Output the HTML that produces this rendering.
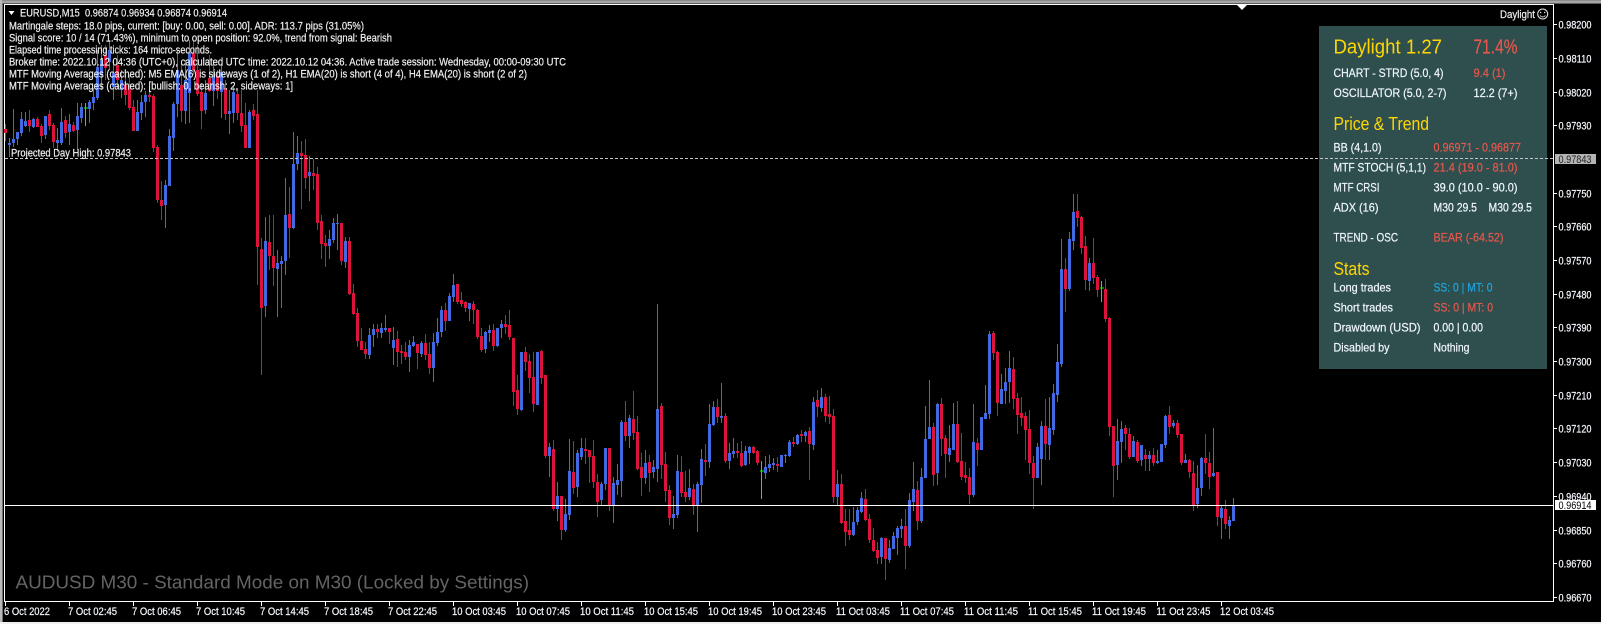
<!DOCTYPE html>
<html><head><meta charset="utf-8"><title>EURUSD,M15</title>
<style>
html,body{margin:0;padding:0;background:#000;width:1601px;height:624px;overflow:hidden}
svg{display:block;position:absolute;left:0;top:0}
text{font-family:"Liberation Sans",Arial,sans-serif;white-space:pre}
.t{font-size:11px;fill:#f0f0f0;stroke:#f0f0f0;stroke-width:.2px}
.a{font-size:11px;fill:#f6f9ff;stroke:#f6f9ff;stroke-width:.2px}
.p{font-size:12px;fill:#f2f8fc;stroke:#f2f8fc;stroke-width:.2px}
.h{font-size:20px;fill:#ffd700}
.s{font-size:18px;fill:#ffd700}
.r{fill:#e9584c;stroke:#e9584c;stroke-width:.2px}
.b{fill:#1ea7e0;stroke:#1ea7e0;stroke-width:.2px}
</style></head><body>
<svg width="1601" height="624" viewBox="0 0 1601 624" xmlns="http://www.w3.org/2000/svg">
<rect width="1601" height="624" fill="#000"/>
<g shape-rendering="crispEdges">
<rect x="0" y="0" width="1601" height="1" fill="#8c8c8c"/>
<rect x="0" y="1" width="1601" height="2" fill="#a6a6a6"/>
<rect x="0" y="3" width="1601" height="1" fill="#5c5c5c"/>
<rect x="0" y="0" width="2" height="624" fill="#b8b8b8"/>
<rect x="2" y="3" width="1" height="621" fill="#707070"/>
<rect x="0" y="622" width="1601" height="2" fill="#f0f0f0"/>
<rect x="4" y="4" width="1550" height="1" fill="#fff"/>
<rect x="4" y="4" width="1" height="598" fill="#fff"/>
<rect x="1553" y="4" width="1" height="598" fill="#fff"/>
<rect x="4" y="601" width="1550" height="1" fill="#fff"/>
</g>
<g fill="none" shape-rendering="crispEdges">
<!-- blue wicks -->
<path stroke="#4169e1" stroke-width="1" d="M9.5 138V157M13.5 109V147M17.5 132V145M21.5 112V136M25.5 112V127M33.5 118V128M45.5 116V139M57.5 128V152M61.5 108V145M69.5 114V145M77.5 103V150M81.5 103V123M89.5 100V123M93.5 88V110M97.5 50V100M101.5 45V90M109.5 40V70M113.5 60V100M121.5 70V98M137.5 100V131M141.5 95V120M145.5 91V117M165.5 180V228M169.5 129V186M173.5 102V151M177.5 50V117M185.5 60V124M189.5 40V123M205.5 80V114M213.5 60V106M221.5 65V118M229.5 90V134M233.5 85V123M249.5 110V148M265.5 217V317M277.5 250V317M281.5 256V308M285.5 178V275M293.5 132V229M297.5 136V170M309.5 156V201M329.5 230V259M333.5 218V243M337.5 214V250M345.5 237V268M369.5 328V359M373.5 324V347M381.5 323V338M385.5 315V332M393.5 327V365M409.5 340V372M413.5 336V347M421.5 341V357M433.5 333V382M437.5 318V346M441.5 306V337M449.5 293V321M453.5 274V302M469.5 303V321M485.5 331V353M489.5 325V342M497.5 328V347M501.5 320V338M521.5 352V411M537.5 352V405M549.5 443V477M557.5 482V521M565.5 499V532M569.5 439V520M577.5 450V497M581.5 438V460M601.5 482V506M605.5 448V490M613.5 477V523M617.5 464V495M621.5 420V497M629.5 415V448M645.5 450V484M653.5 460V478M657.5 304V482M673.5 496V529M677.5 455V518M689.5 469V500M697.5 482V532M701.5 449V503M709.5 404V468M713.5 401V426M721.5 383V423M729.5 443V469M733.5 438V458M745.5 446V466M749.5 446V464M765.5 456V479M769.5 455V472M773.5 458V470M781.5 455V467M785.5 454V463M789.5 440V457M797.5 434V445M805.5 431V442M813.5 397V450M821.5 388V412M837.5 470V506M853.5 507V536M857.5 507V525M861.5 492V513M881.5 537V564M889.5 540V563M893.5 532V549M897.5 526V555M901.5 519V538M909.5 493V548M913.5 462V511M921.5 468V523M925.5 406V478M929.5 380V439M937.5 403V485M949.5 425V462M953.5 403V450M973.5 404V497M981.5 417V450M985.5 385V419M989.5 331V419M1001.5 374V404M1005.5 368V404M1009.5 351V403M1037.5 443V478M1041.5 421V485M1049.5 397V460M1053.5 384V435M1057.5 344V402M1061.5 239V367M1069.5 232V291M1073.5 194V250M1089.5 258V291M1117.5 419V480M1121.5 421V463M1133.5 436V457M1141.5 445V466M1149.5 451V471M1157.5 450V464M1161.5 444V462M1165.5 415V448M1173.5 420V428M1185.5 454V463M1197.5 465V508M1201.5 457V496M1213.5 428V477M1221.5 505V539M1229.5 516V539M1233.5 498V521"/>
<!-- blue bodies -->
<path stroke="#4169e1" stroke-width="3" d="M9.5 143V145M13.5 139V143M17.5 132V139M21.5 119V133M25.5 121V126M33.5 119V127M45.5 116V135M57.5 140V143M61.5 122V143M69.5 124V132M77.5 116V130M81.5 107V118M89.5 102V109M93.5 97V103M97.5 67V98M101.5 60V75M109.5 50V62M113.5 73V87M121.5 80V90M137.5 112V131M141.5 102V113M145.5 95V102M165.5 185V205M169.5 136V186M173.5 104V138M177.5 70V104M185.5 80V111M189.5 53V93M205.5 93V110M213.5 75V91M221.5 72V92M229.5 111V114M233.5 92V113M249.5 112V148M265.5 241V306M277.5 263V269M281.5 261V264M285.5 215V261M293.5 164V228M297.5 153V164M309.5 172V176M329.5 239V246M333.5 223V240M337.5 223V224M345.5 241V262M369.5 335V355M373.5 329V335M381.5 328V333M385.5 328V330M393.5 340V348M409.5 345V357M413.5 342V346M421.5 343V354M433.5 342V368M437.5 332V343M441.5 310V332M449.5 296V321M453.5 285V297M469.5 303V309M485.5 332V349M489.5 330V333M497.5 328V346M501.5 324V328M521.5 352V410M537.5 352V405M549.5 447V456M557.5 496V509M565.5 514V530M569.5 471V515M577.5 453V487M581.5 448V457M601.5 484V500M605.5 448V484M613.5 483V505M617.5 480V485M621.5 422V481M629.5 418V436M645.5 463V478M653.5 467V472M657.5 409V469M673.5 514V518M677.5 471V515M689.5 488V497M697.5 484V505M701.5 459V485M709.5 424V462M713.5 407V425M721.5 416V418M729.5 453V461M733.5 451V454M745.5 451V465M749.5 447V453M765.5 467V473M769.5 464V468M773.5 463V465M781.5 455V467M785.5 455V456M789.5 442V456M797.5 435V444M805.5 432V436M813.5 402V445M821.5 397V408M837.5 484V497M853.5 522V535M857.5 510V522M861.5 498V512M881.5 538V557M889.5 548V560M893.5 536V549M897.5 528V538M901.5 526V529M909.5 500V546M913.5 489V502M921.5 477V521M925.5 439V478M929.5 427V439M937.5 404V473M949.5 448V455M953.5 424V450M973.5 442V495M981.5 417V450M985.5 413V419M989.5 334V414M1001.5 389V404M1005.5 382V391M1009.5 368V382M1037.5 447V478M1041.5 426V459M1049.5 428V445M1053.5 393V430M1057.5 362V395M1061.5 269V364M1069.5 239V289M1073.5 212V241M1089.5 263V281M1117.5 441V465M1121.5 429V442M1133.5 441V457M1141.5 445V460M1149.5 455V459M1157.5 461V463M1161.5 444V462M1165.5 416V445M1173.5 423V426M1185.5 460V463M1197.5 488V504M1201.5 458V488M1213.5 473V476M1221.5 508V518M1229.5 520V526M1233.5 505V521"/>
<!-- red wicks -->
<path stroke="#dc143c" stroke-width="1" d="M5.5 124V141M29.5 110V132M37.5 117V127M41.5 124V143M49.5 110V130M53.5 123V148M65.5 116V138M73.5 122V132M105.5 45V80M117.5 55V88M125.5 75V105M129.5 75V110M133.5 100V131M149.5 87V102M153.5 94V152M157.5 145V203M161.5 181V220M181.5 62V122M193.5 40V75M197.5 45V96M201.5 83V129M209.5 55V92M217.5 70V99M225.5 80V120M237.5 88V120M241.5 90V132M245.5 103V148M253.5 104V120M257.5 90V285M261.5 238V375M269.5 215V270M273.5 215V286M289.5 187V258M301.5 141V209M305.5 139V189M313.5 159V190M317.5 167V230M321.5 215V259M325.5 235V267M341.5 223V265M349.5 237V295M353.5 284V315M357.5 308V347M361.5 328V350M365.5 342V359M377.5 324V338M389.5 328V344M397.5 331V367M401.5 345V364M405.5 342V360M417.5 344V369M425.5 334V360M429.5 342V374M445.5 303V331M457.5 284V304M461.5 292V307M465.5 301V312M473.5 301V324M477.5 309V339M481.5 328V352M493.5 324V351M505.5 315V334M509.5 310V340M513.5 338V406M517.5 375V415M525.5 347V371M529.5 354V393M533.5 352V412M541.5 350V384M545.5 375V458M553.5 440V511M561.5 496V540M573.5 441V494M585.5 438V464M589.5 450V483M593.5 440V488M597.5 474V517M609.5 448V511M625.5 401V441M633.5 391V440M637.5 416V470M641.5 453V496M649.5 455V492M661.5 403V479M665.5 452V502M669.5 485V525M681.5 456V497M685.5 471V502M693.5 484V515M705.5 444V476M717.5 399V423M725.5 413V463M737.5 443V458M741.5 441V467M753.5 446V454M757.5 450V465M777.5 457V472M793.5 437V447M801.5 430V442M809.5 427V480M817.5 390V417M825.5 394V422M829.5 396V424M833.5 409V503M841.5 474V524M845.5 509V546M849.5 509V540M865.5 489V521M869.5 514V543M873.5 528V552M877.5 542V564M885.5 538V580M905.5 509V569M917.5 481V530M933.5 423V486M941.5 398V456M945.5 435V478M957.5 401V463M961.5 433V480M965.5 462V483M969.5 468V504M977.5 438V466M993.5 331V360M997.5 351V416M1013.5 357V409M1017.5 393V434M1021.5 397V426M1025.5 412V460M1029.5 410V474M1033.5 456V509M1045.5 399V460M1065.5 258V312M1077.5 194V227M1081.5 216V254M1085.5 236V290M1093.5 238V284M1097.5 275V297M1105.5 279V322M1109.5 317V436M1113.5 426V497M1125.5 425V450M1129.5 428V459M1137.5 440V463M1145.5 449V471M1153.5 448V466M1169.5 406V434M1177.5 420V438M1181.5 434V465M1189.5 459V478M1193.5 461V511M1205.5 434V474M1209.5 452V489M1217.5 472V526M1225.5 500V529"/>
<!-- red bodies -->
<path stroke="#dc143c" stroke-width="3" d="M5.5 129V133M29.5 120V126M37.5 119V127M41.5 126V136M49.5 114V126M53.5 125V142M65.5 120V133M73.5 125V131M105.5 55V68M117.5 65V80M125.5 85V95M129.5 88V108M133.5 107V131M149.5 95V97M153.5 96V148M157.5 147V200M161.5 200V206M181.5 85V111M193.5 53V70M197.5 70V94M201.5 92V111M209.5 78V91M217.5 76V91M225.5 88V114M237.5 94V113M241.5 113V126M245.5 125V148M253.5 110V116M257.5 114V247M261.5 249V308M269.5 242V256M273.5 256V268M289.5 214V228M301.5 153V156M305.5 155V178M313.5 173V176M317.5 174V223M321.5 221V244M325.5 243V246M341.5 223V261M349.5 241V294M353.5 293V314M357.5 313V341M361.5 341V350M365.5 349V354M377.5 329V332M389.5 328V332M397.5 339V352M401.5 351V353M405.5 352V357M417.5 344V353M425.5 343V355M429.5 354V368M445.5 310V321M457.5 284V302M461.5 300V304M465.5 302V308M473.5 304V310M477.5 310V337M481.5 336V350M493.5 330V346M505.5 324V327M509.5 325V337M513.5 338V392M517.5 390V409M525.5 352V362M529.5 361V378M533.5 377V404M541.5 351V378M545.5 375V456M553.5 449V509M561.5 496V530M573.5 472V488M585.5 449V451M589.5 450V457M593.5 456V482M597.5 482V502M609.5 448V505M625.5 422V436M633.5 419V433M637.5 432V469M641.5 467V478M649.5 462V473M661.5 406V465M665.5 464V491M669.5 490V518M681.5 472V493M685.5 492V497M693.5 489V505M705.5 460V462M717.5 407V417M725.5 416V461M737.5 451V453M741.5 453V466M753.5 447V453M757.5 451V463M777.5 464V466M793.5 442V444M801.5 434V436M809.5 431V444M817.5 400V407M825.5 397V416M829.5 414V417M833.5 416V497M841.5 484V523M845.5 521V532M849.5 530V535M865.5 499V520M869.5 519V540M873.5 540V551M877.5 550V558M885.5 538V559M905.5 526V546M917.5 490V521M933.5 427V475M941.5 404V439M945.5 438V454M957.5 424V462M961.5 461V477M965.5 475V478M969.5 477V495M977.5 443V450M993.5 333V353M997.5 352V403M1013.5 369V399M1017.5 398V415M1021.5 413V418M1025.5 416V430M1029.5 429V463M1033.5 463V478M1045.5 426V444M1065.5 269V289M1077.5 211V218M1081.5 217V248M1085.5 246V280M1093.5 263V278M1097.5 277V290M1105.5 289V319M1109.5 318V427M1113.5 426V466M1125.5 428V434M1129.5 434V457M1137.5 442V461M1145.5 455V459M1153.5 455V463M1169.5 415V427M1177.5 423V435M1181.5 434V463M1189.5 460V472M1193.5 473V505M1205.5 458V463M1209.5 463V477M1217.5 472V517M1225.5 509V524"/>
<!-- green doji -->
<path stroke="#00ff00" stroke-width="1" d="M85.5 103V126M84 108H88M761.5 461V499M760 471H764M1101.5 281V302M1100 288H1104"/>
</g>
<!-- panel -->
<rect x="1319" y="26" width="228" height="343" fill="#2f4f4f" shape-rendering="crispEdges"/>
<!-- lines -->
<path d="M5 158.5H1553" stroke="#c8c8c8" stroke-width="1" stroke-dasharray="3 2" shape-rendering="crispEdges" fill="none"/>
<rect x="5" y="505" width="1548" height="1" fill="#fff" shape-rendering="crispEdges"/>
<!-- triangle markers -->
<path d="M1237 5H1247L1242 10Z" fill="#fff"/>
<path d="M8.5 11H14.5L11.5 15Z" fill="#fff"/>
<!-- top left text -->
<text class="t" x="20" y="16.5" textLength="207" lengthAdjust="spacingAndGlyphs">EURUSD,M15  0.96874 0.96934 0.96874 0.96914</text>
<text class="t" x="9" y="29.5" textLength="355" lengthAdjust="spacingAndGlyphs">Martingale steps: 18.0 pips, current: [buy: 0.00, sell: 0.00]. ADR: 113.7 pips (31.05%)</text>
<text class="t" x="9" y="41.5" textLength="383" lengthAdjust="spacingAndGlyphs">Signal score: 10 / 14 (71.43%), minimum to open position: 92.0%, trend from signal: Bearish</text>
<text class="t" x="9" y="53.5" textLength="203" lengthAdjust="spacingAndGlyphs">Elapsed time processing ticks: 164 micro-seconds.</text>
<text class="t" x="9" y="65.5" textLength="557" lengthAdjust="spacingAndGlyphs">Broker time: 2022.10.12 04:36 (UTC+0), calculated UTC time: 2022.10.12 04:36. Active trade session: Wednesday, 00:00-09:30 UTC</text>
<text class="t" x="9" y="77.5" textLength="518" lengthAdjust="spacingAndGlyphs">MTF Moving Averages (cached): M5 EMA(6) is sideways (1 of 2), H1 EMA(20) is short (4 of 4), H4 EMA(20) is short (2 of 2)</text>
<text class="t" x="9" y="89.5" textLength="284" lengthAdjust="spacingAndGlyphs">MTF Moving Averages (cached): [bullish: 0, bearish: 2, sideways: 1]</text>
<text class="t" x="11" y="156.5" textLength="120" lengthAdjust="spacingAndGlyphs">Projected Day High: 0.97843</text>
<!-- watermark -->
<text x="15.5" y="588.5" font-size="18" fill="#646464" textLength="513.5" lengthAdjust="spacingAndGlyphs">AUDUSD M30 - Standard Mode on M30 (Locked by Settings)</text>
<!-- top-right -->
<text class="t" x="1500" y="18" textLength="35" lengthAdjust="spacingAndGlyphs">Daylight</text>
<circle cx="1542.7" cy="14" r="5" fill="none" stroke="#e8e8e8" stroke-width="1"/>
<circle cx="1540.7" cy="12.5" r=".7" fill="#e8e8e8"/><circle cx="1544.7" cy="12.5" r=".7" fill="#e8e8e8"/>
<path d="M1540 15.5Q1542.7 18.5 1545.4 15.5" fill="none" stroke="#e8e8e8" stroke-width=".9"/>
<!-- panel text -->
<text class="h" x="1333.5" y="53.5" textLength="108.5" lengthAdjust="spacingAndGlyphs">Daylight 1.27</text>
<text class="h r" x="1473.5" y="53.5" textLength="44" lengthAdjust="spacingAndGlyphs">71.4%</text>
<text class="p" x="1333.5" y="77" textLength="110" lengthAdjust="spacingAndGlyphs">CHART - STRD (5.0, 4)</text>
<text class="p r" x="1473.5" y="77" textLength="32" lengthAdjust="spacingAndGlyphs">9.4 (1)</text>
<text class="p" x="1333.5" y="97" textLength="113" lengthAdjust="spacingAndGlyphs">OSCILLATOR (5.0, 2-7)</text>
<text class="p" x="1473.5" y="97" textLength="44" lengthAdjust="spacingAndGlyphs">12.2 (7+)</text>
<text class="s" x="1333.5" y="130" textLength="95.5" lengthAdjust="spacingAndGlyphs">Price &amp; Trend</text>
<text class="p" x="1333.5" y="151.5" textLength="48" lengthAdjust="spacingAndGlyphs">BB (4,1.0)</text>
<text class="p r" x="1433.5" y="151.5" textLength="87.5" lengthAdjust="spacingAndGlyphs">0.96971 - 0.96877</text>
<text class="p" x="1333.5" y="171.5" textLength="92.5" lengthAdjust="spacingAndGlyphs">MTF STOCH (5,1,1)</text>
<text class="p r" x="1433.5" y="171.5" textLength="84" lengthAdjust="spacingAndGlyphs">21.4 (19.0 - 81.0)</text>
<text class="p" x="1333.5" y="191.5" textLength="46" lengthAdjust="spacingAndGlyphs">MTF CRSI</text>
<text class="p" x="1433.5" y="191.5" textLength="84" lengthAdjust="spacingAndGlyphs">39.0 (10.0 - 90.0)</text>
<text class="p" x="1333.5" y="211.5" textLength="45" lengthAdjust="spacingAndGlyphs">ADX (16)</text>
<text class="p" x="1433.5" y="211.5" textLength="43.5" lengthAdjust="spacingAndGlyphs">M30 29.5</text>
<text class="p" x="1488.5" y="211.5" textLength="43.5" lengthAdjust="spacingAndGlyphs">M30 29.5</text>
<text class="p" x="1333.5" y="241.5" textLength="64.5" lengthAdjust="spacingAndGlyphs">TREND - OSC</text>
<text class="p r" x="1433.5" y="241.5" textLength="70" lengthAdjust="spacingAndGlyphs">BEAR (-64.52)</text>
<text class="s" x="1333.5" y="275" textLength="36" lengthAdjust="spacingAndGlyphs">Stats</text>
<text class="p" x="1333.5" y="291.5" textLength="57.5" lengthAdjust="spacingAndGlyphs">Long trades</text>
<text class="p b" x="1433.5" y="291.5" textLength="59" lengthAdjust="spacingAndGlyphs">SS: 0 | MT: 0</text>
<text class="p" x="1333.5" y="311.5" textLength="59.5" lengthAdjust="spacingAndGlyphs">Short trades</text>
<text class="p r" x="1433.5" y="311.5" textLength="59.5" lengthAdjust="spacingAndGlyphs">SS: 0 | MT: 0</text>
<text class="p" x="1333.5" y="331.5" textLength="87" lengthAdjust="spacingAndGlyphs">Drawdown (USD)</text>
<text class="p" x="1433.5" y="331.5" textLength="49.5" lengthAdjust="spacingAndGlyphs">0.00 | 0.00</text>
<text class="p" x="1333.5" y="351.5" textLength="56" lengthAdjust="spacingAndGlyphs">Disabled by</text>
<text class="p" x="1433.5" y="351.5" textLength="36" lengthAdjust="spacingAndGlyphs">Nothing</text>
<!-- price axis -->
<path d="M1554 24.5h3M1554 58.5h3M1554 92.5h3M1554 125.5h3M1554 193.5h3M1554 226.5h3M1554 260.5h3M1554 294.5h3M1554 327.5h3M1554 361.5h3M1554 395.5h3M1554 428.5h3M1554 462.5h3M1554 496.5h3M1554 530.5h3M1554 563.5h3M1554 597.5h3" stroke="#fff" stroke-width="1" shape-rendering="crispEdges" fill="none"/>
<text class="a" x="1558.5" y="28.5" textLength="33" lengthAdjust="spacingAndGlyphs">0.98200</text>
<text class="a" x="1558.5" y="62.5" textLength="33" lengthAdjust="spacingAndGlyphs">0.98110</text>
<text class="a" x="1558.5" y="96.5" textLength="33" lengthAdjust="spacingAndGlyphs">0.98020</text>
<text class="a" x="1558.5" y="129.5" textLength="33" lengthAdjust="spacingAndGlyphs">0.97930</text>
<text class="a" x="1558.5" y="197.5" textLength="33" lengthAdjust="spacingAndGlyphs">0.97750</text>
<text class="a" x="1558.5" y="230.5" textLength="33" lengthAdjust="spacingAndGlyphs">0.97660</text>
<text class="a" x="1558.5" y="264.5" textLength="33" lengthAdjust="spacingAndGlyphs">0.97570</text>
<text class="a" x="1558.5" y="298.5" textLength="33" lengthAdjust="spacingAndGlyphs">0.97480</text>
<text class="a" x="1558.5" y="331.5" textLength="33" lengthAdjust="spacingAndGlyphs">0.97390</text>
<text class="a" x="1558.5" y="365.5" textLength="33" lengthAdjust="spacingAndGlyphs">0.97300</text>
<text class="a" x="1558.5" y="399.5" textLength="33" lengthAdjust="spacingAndGlyphs">0.97210</text>
<text class="a" x="1558.5" y="432.5" textLength="33" lengthAdjust="spacingAndGlyphs">0.97120</text>
<text class="a" x="1558.5" y="466.5" textLength="33" lengthAdjust="spacingAndGlyphs">0.97030</text>
<text class="a" x="1558.5" y="500.5" textLength="33" lengthAdjust="spacingAndGlyphs">0.96940</text>
<text class="a" x="1558.5" y="534.5" textLength="33" lengthAdjust="spacingAndGlyphs">0.96850</text>
<text class="a" x="1558.5" y="567.5" textLength="33" lengthAdjust="spacingAndGlyphs">0.96760</text>
<text class="a" x="1558.5" y="601.5" textLength="33" lengthAdjust="spacingAndGlyphs">0.96670</text>
<rect x="1555" y="154" width="41" height="10" fill="#b4b4b4" shape-rendering="crispEdges"/>
<text x="1558.5" y="163" font-size="11" fill="#222" textLength="33" lengthAdjust="spacingAndGlyphs">0.97843</text>
<rect x="1555" y="500" width="41" height="10" fill="#fff" shape-rendering="crispEdges"/>
<text x="1558.5" y="509" font-size="11" fill="#000" textLength="33" lengthAdjust="spacingAndGlyphs">0.96914</text>
<!-- time axis -->
<path d="M5.5 602v4M69.5 602v4M133.5 602v4M197.5 602v4M261.5 602v4M325.5 602v4M389.5 602v4M453.5 602v4M517.5 602v4M581.5 602v4M645.5 602v4M709.5 602v4M773.5 602v4M837.5 602v4M901.5 602v4M965.5 602v4M1029.5 602v4M1093.5 602v4M1157.5 602v4M1221.5 602v4" stroke="#fff" stroke-width="1" shape-rendering="crispEdges" fill="none"/>
<text class="a" x="4" y="615" textLength="46" lengthAdjust="spacingAndGlyphs">6 Oct 2022</text>
<text class="a" x="68" y="615" textLength="49" lengthAdjust="spacingAndGlyphs">7 Oct 02:45</text>
<text class="a" x="132" y="615" textLength="49" lengthAdjust="spacingAndGlyphs">7 Oct 06:45</text>
<text class="a" x="196" y="615" textLength="49" lengthAdjust="spacingAndGlyphs">7 Oct 10:45</text>
<text class="a" x="260" y="615" textLength="49" lengthAdjust="spacingAndGlyphs">7 Oct 14:45</text>
<text class="a" x="324" y="615" textLength="49" lengthAdjust="spacingAndGlyphs">7 Oct 18:45</text>
<text class="a" x="388" y="615" textLength="49" lengthAdjust="spacingAndGlyphs">7 Oct 22:45</text>
<text class="a" x="452" y="615" textLength="54" lengthAdjust="spacingAndGlyphs">10 Oct 03:45</text>
<text class="a" x="516" y="615" textLength="54" lengthAdjust="spacingAndGlyphs">10 Oct 07:45</text>
<text class="a" x="580" y="615" textLength="54" lengthAdjust="spacingAndGlyphs">10 Oct 11:45</text>
<text class="a" x="644" y="615" textLength="54" lengthAdjust="spacingAndGlyphs">10 Oct 15:45</text>
<text class="a" x="708" y="615" textLength="54" lengthAdjust="spacingAndGlyphs">10 Oct 19:45</text>
<text class="a" x="772" y="615" textLength="54" lengthAdjust="spacingAndGlyphs">10 Oct 23:45</text>
<text class="a" x="836" y="615" textLength="54" lengthAdjust="spacingAndGlyphs">11 Oct 03:45</text>
<text class="a" x="900" y="615" textLength="54" lengthAdjust="spacingAndGlyphs">11 Oct 07:45</text>
<text class="a" x="964" y="615" textLength="54" lengthAdjust="spacingAndGlyphs">11 Oct 11:45</text>
<text class="a" x="1028" y="615" textLength="54" lengthAdjust="spacingAndGlyphs">11 Oct 15:45</text>
<text class="a" x="1092" y="615" textLength="54" lengthAdjust="spacingAndGlyphs">11 Oct 19:45</text>
<text class="a" x="1156.5" y="615" textLength="54" lengthAdjust="spacingAndGlyphs">11 Oct 23:45</text>
<text class="a" x="1220" y="615" textLength="54" lengthAdjust="spacingAndGlyphs">12 Oct 03:45</text>
</svg>
</body></html>
